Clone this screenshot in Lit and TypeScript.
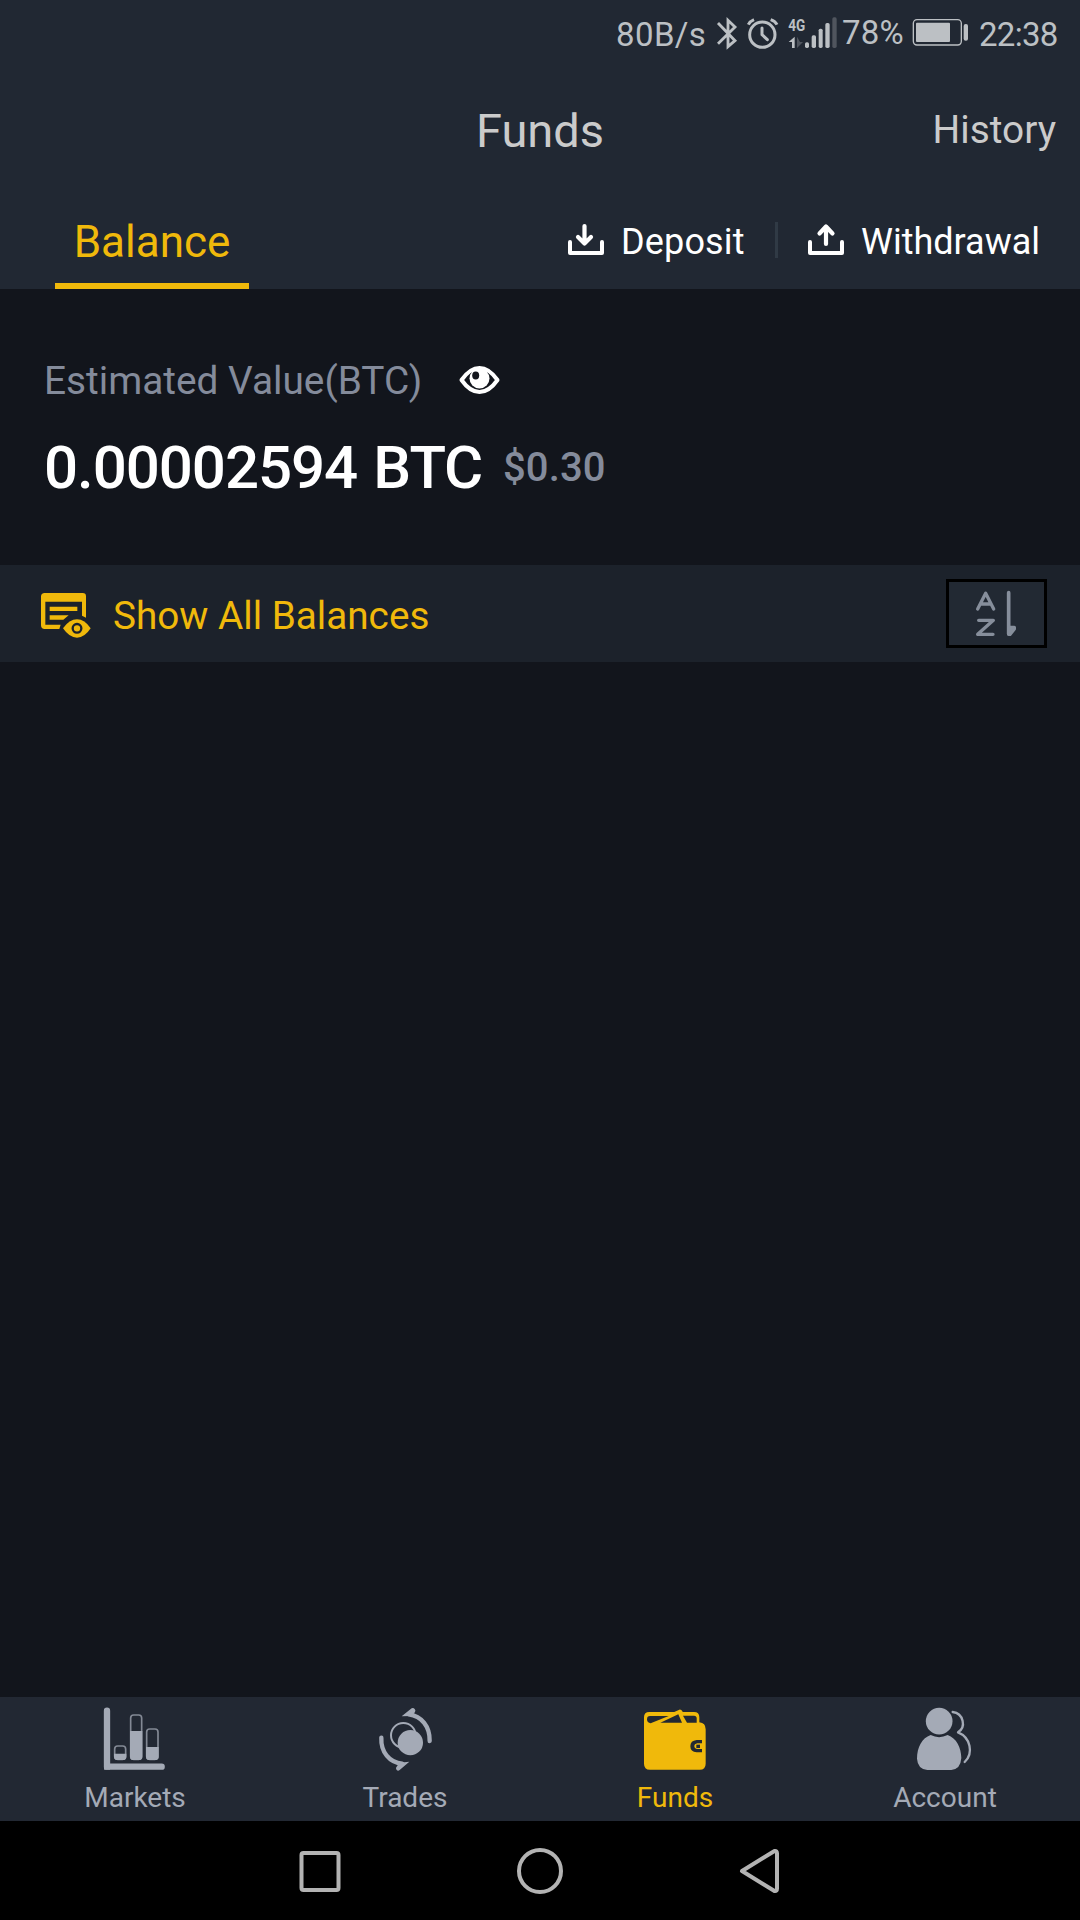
import { LitElement, html, svg, css, TemplateResult } from "lit";
import { customElement, property } from "lit/decorators.js";
import { classMap } from "lit/directives/class-map.js";

interface Tab {
  label: string;
  viewBox: string;
  icon: TemplateResult;
  active?: boolean;
}

const marketsIcon = svg`
  <path d="M141 92V260H305" fill="none" stroke="currentColor" stroke-width="19" stroke-linecap="round" stroke-linejoin="round"/>
  <path d="M132 240h18v29h-18z" fill="currentColor"/>
  <g fill="none" stroke="currentColor" stroke-width="5" opacity=".75">
    <rect x="164" y="198" width="33" height="40" rx="9"/>
    <rect x="212" y="105" width="33" height="133" rx="9"/>
    <rect x="260" y="147" width="34" height="91" rx="9"/>
  </g>
  <g fill="currentColor">
    <path d="M162 221h37v9q0 10-10 10h-17q-10 0-10-10z"/>
    <path d="M210 153h37v77q0 10-10 10h-17q-10 0-10-10z"/>
    <path d="M258 201h38v29q0 10-10 10h-18q-10 0-10-10z"/>
  </g>`;

const tradesIcon = svg`
  <g fill="none" stroke="currentColor" stroke-linecap="round">
    <path d="M269 183C270 139 245 108 206 103" stroke-width="13"/>
    <path d="M124 173C122 216 148 248 187 251" stroke-width="13"/>
    <circle cx="190" cy="166" r="37" stroke-width="6"/>
  </g>
  <path d="M185 109L215 85q5-3 9 2 4 5 1 9l-9 12z" fill="currentColor"/>
  <path d="M208 245L179 270q-5 4-9 0-4-5 0-10l8-12z" fill="currentColor"/>
  <circle cx="211" cy="188" r="38" fill="currentColor"/>`;

const fundsIcon = svg`
  <path d="M102 128V112q0-16 16-16H252q16 0 16 16v15q19 2 19 21v103q0 18-18 18H120q-18 0-18-18z" fill="currentColor"/>
  <path d="M120 108H176L122 130Q111 128 111 118q0-10 9-10z" fill="#222833"/>
  <path d="M151 128L205 103 216 128z" fill="#222833"/>
  <path d="M219 107H252q8 0 8 8v13H231z" fill="#222833"/>
  <path d="M191 97L208 89q6-1 9 5l5 9-14-4z" fill="currentColor"/>
  <path d="M276 180H260q-19 2-19 18.500t19 18.500H276V207H262q-9-2-9-8.500t9-8.500H276z" fill="#222833"/>
  <rect x="259" y="194" width="11" height="10" fill="#222833"/>`;

const accountIcon = svg`
  <circle cx="207.500" cy="123.500" r="40" fill="currentColor"/>
  <path d="M182 165Q207 178 233 165C259 174 274 203 274 234Q272 267 244 270H172Q143 267 141 236C141 202 156 174 182 165z" fill="currentColor"/>
  <path d="M248 96C281 100 289 142 264 157C301 172 312 219 284 246" fill="none" stroke="currentColor" stroke-width="7" stroke-linejoin="round" stroke-linecap="round"/>`;

@customElement("wallet-tab-bar")
class WalletTabBar extends LitElement {
  @property({ attribute: false }) tabs: Tab[] = [];

  static styles = css`
    :host { display: block; }
    .tabs {
      display: grid;
      grid-template-columns: repeat(4, 1fr);
      height: 124px;
      background: #222833;
    }
    .tab {
      display: flex;
      flex-direction: column;
      align-items: center;
      padding-top: 10px;
      color: #a4aab6;
      font-size: 28px;
      line-height: 33px;
    }
    .tab svg { display: block; width: 64px; height: 64px; margin-bottom: 10px; }
    .active { color: #f0b90b; }
  `;

  render() {
    return html`<nav class="tabs">
      ${this.tabs.map(
        (t) => html`<div class=${classMap({ tab: true, active: !!t.active })}>
          <svg viewBox=${t.viewBox}>${t.icon}</svg>
          <span>${t.label}</span>
        </div>`
      )}
    </nav>`;
  }
}

@customElement("status-strip")
class StatusStrip extends LitElement {
  static styles = css`
    :host { display: block; color: #bcc0c4; }
    .strip {
      display: flex;
      height: 70px;
      padding-left: 616px;
      font-size: 33px;
      line-height: 70px;
      white-space: nowrap;
    }
    svg { display: block; flex: none; height: 70px; }
    .speed { width: 99px; letter-spacing: 0.4px; }
    .bt { width: 24px; margin-right: 6px; }
    .alarm { width: 35px; margin-right: 6px; }
    .signal { width: 52px; margin-right: 4px; }
    .percent { width: 68px; line-height: 66px; letter-spacing: 0.2px; }
    .battery { width: 60px; margin-right: 9px; }
    .clock { letter-spacing: -0.7px; }
    .gen { font: 700 52px Roboto, sans-serif; }
  `;

  render() {
    return html`<div class="strip">
      <span class="speed">80B/s</span>
      <svg class="bt" viewBox="345 0 72 210" fill="none" stroke="currentColor" stroke-width="8.500">
        <path d="M354 69L405 122 384 140V61L405 81 354 131"/>
      </svg>
      <svg class="alarm" viewBox="435 0 105 210" fill="none" stroke="currentColor" stroke-width="9">
        <circle cx="487" cy="104" r="38"/>
        <path d="M486 84V104L502 119" stroke-width="9" stroke-linecap="round"/>
        <path d="M445 74Q450 64 462 59M531 74Q526 64 512 59" stroke-width="9"/>
      </svg>
      <svg class="signal" viewBox="558 0 156 210" fill="currentColor">
        <text class="gen" x="565" y="93" textLength="51" lengthAdjust="spacingAndGlyphs">4G</text>
        <path d="M584 110V144H576V126H566z"/>
        <path d="M591 110V144L609 126H600z" opacity=".3"/>
        <rect x="615" y="127" width="12" height="17" rx="5"/>
        <rect x="635" y="106" width="13" height="38" rx="5"/>
        <rect x="656" y="86" width="12" height="58" rx="5"/>
        <rect x="676" y="69" width="13" height="75" rx="5"/>
        <rect x="697" y="52" width="13" height="92" rx="5" opacity=".3"/>
      </svg>
      <span class="percent">78%</span>
      <svg class="battery" viewBox="930 0 180 210" fill="currentColor">
        <rect x="940" y="59" width="144" height="76" rx="11" fill="none" stroke="currentColor" stroke-width="4"/>
        <rect x="948" y="68" width="102" height="58" rx="3"/>
        <rect x="1091" y="72" width="13" height="50" rx="6"/>
      </svg>
      <span class="clock">22:38</span>
    </div>`;
  }
}

@customElement("app-root")
class AppRoot extends LitElement {
  static styles = css`
    :host { display: block; font-family: Roboto, sans-serif; }
    .screen {
      display: flex;
      flex-direction: column;
      width: 1080px;
      height: 1920px;
      overflow: hidden;
      background: #12151c;
    }
    svg { display: block; flex: none; }
    .top { height: 289px; background: #212833; }
    .title-row {
      display: grid;
      grid-template-columns: 1fr auto 1fr;
      align-items: center;
      height: 122px;
      padding: 0 24px;
      color: #cbcbcb;
    }
    .title { grid-column: 2; font-size: 47px; line-height: 56px; }
    .history { justify-self: end; font-size: 38.8px; line-height: 46px; margin-top: -2px; }
    .actions { display: flex; height: 97px; padding-left: 55px; }
    .balance-tab {
      box-sizing: border-box;
      width: 194px;
      height: 97px;
      border-bottom: 6px solid #f0b90b;
      color: #f0b90b;
      font-size: 44px;
      line-height: 101px;
      text-align: center;
      margin-right: 316px;
    }
    .action {
      display: flex;
      color: #fff;
      font-size: 36px;
      line-height: 101px;
    }
    .action svg { width: 40px; height: 97px; }
    .deposit { width: 210px; gap: 16px; letter-spacing: 0.15px; }
    .rule { width: 3px; height: 36px; margin: 30px 27px 0 0; background: #303a45; }
    .withdraw { gap: 16px; }
    .estimate { height: 276px; box-sizing: border-box; padding: 66px 0 0 44px; }
    .caption {
      display: flex;
      align-items: center;
      height: 50px;
      color: #848b9b;
      font-size: 38.8px;
      line-height: 50px;
    }
    .caption-text { width: 410px; padding-top: 2px; white-space: nowrap; }
    .eye { width: 50px; height: 50px; }
    .amounts { display: flex; align-items: center; height: 80px; margin-top: 23px; white-space: nowrap; }
    .btc {
      width: 459px;
      color: #fff;
      font-size: 60px;
      line-height: 80px;
      font-weight: 500;
      letter-spacing: -1.05px;
      word-spacing: 2.4px;
    }
    .usd { color: #848b9b; font-size: 40px; line-height: 80px; font-weight: 500; letter-spacing: 0.1px; }
    .filter {
      display: flex;
      align-items: center;
      box-sizing: border-box;
      height: 97px;
      padding: 0 33px 0 40px;
      background: #1c222b;
      color: #f0b90b;
    }
    .show-icon { width: 52px; height: 97px; margin-right: 21px; }
    .show { flex: 1; font-size: 38.7px; line-height: 46px; padding-top: 4px; }
    .sort {
      box-sizing: border-box;
      width: 101px;
      height: 69px;
      border: 3px solid #000;
      background: #222933;
      color: #868e9b;
    }
    .sort svg { width: 95px; height: 63px; }
    .list { flex: 1; }
    .system {
      display: flex;
      justify-content: space-between;
      align-items: center;
      box-sizing: border-box;
      height: 99px;
      padding: 0 295px;
      background: #000;
    }
    .system svg { width: 50px; height: 50px; }
  `;

  private tabs: Tab[] = [
    { label: "Markets", viewBox: "129 81 192 192", icon: marketsIcon },
    { label: "Trades", viewBox: "99 81 192 192", icon: tradesIcon },
    { label: "Funds", viewBox: "99 81 192 192", icon: fundsIcon, active: true },
    { label: "Account", viewBox: "129 81 192 192", icon: accountIcon },
  ];

  render() {
    return html`<div class="screen">
      <header class="top">
        <status-strip></status-strip>
        <div class="title-row">
          <span class="title">Funds</span>
          <span class="history">History</span>
        </div>
        <div class="actions">
          <div class="balance-tab">Balance</div>
          <div class="action deposit">
            <svg viewBox="0 0 40 97" fill="none" stroke="#fff" stroke-width="4" stroke-linecap="round" stroke-linejoin="round">
              <path d="M5 50V61H37V50" />
              <path d="M19.500 34V51M13 45L19.500 51.500 26 45" stroke-width="4.200"/>
            </svg>
            <span>Deposit</span>
          </div>
          <div class="rule"></div>
          <div class="action withdraw">
            <svg viewBox="0 0 40 97" fill="none" stroke="#fff" stroke-width="4" stroke-linecap="round" stroke-linejoin="round">
              <path d="M5 50V61H37V50" />
              <path d="M21 52V35M14.500 41.500L21 34.500 27.500 41.500" stroke-width="4.200"/>
            </svg>
            <span>Withdrawal</span>
          </div>
        </div>
      </header>
      <section class="estimate">
        <div class="caption">
          <span class="caption-text">Estimated Value(BTC)</span>
          <svg class="eye" viewBox="0 0 50 50">
            <path d="M7.500 25Q16 13 25.500 13T43.500 25Q35 37 25.500 37T7.500 25z" fill="none" stroke="#fff" stroke-width="4" stroke-linejoin="round"/>
            <circle cx="25.500" cy="23.500" r="10" fill="#fff"/>
            <ellipse cx="21.700" cy="20.500" rx="3.500" ry="4" fill="#12151c"/>
          </svg>
        </div>
        <div class="amounts">
          <span class="btc">0.00002594 BTC</span>
          <span class="usd">$0.30</span>
        </div>
      </section>
      <section class="filter">
        <svg class="show-icon" viewBox="120 30 156 291">
          <path d="M134 114H248q10 0 10 10V188L246 182V140H136V209H182L178 222H134q-11 0-11-11V125q0-11 11-11z" fill="#f0b90b"/>
          <path d="M149 155H232V168H149zM149 181H206L190 194H149z" fill="#f0b90b"/>
          <path d="M189 220Q208 193 231 193T272 220Q254 248 231 248T189 220z" fill="#f0b90b"/>
          <circle cx="231" cy="220" r="13" fill="none" stroke="#1c222b" stroke-width="7"/>
        </svg>
        <span class="show">Show All Balances</span>
        <div class="sort">
          <svg viewBox="87 81 285 189" fill="none" stroke="currentColor" stroke-width="10" stroke-linecap="round" stroke-linejoin="round">
            <path d="M173 162L197 115 221 162M181 147H213"/>
            <path d="M176 196H220L173 238H219"/>
            <path d="M266 113V236" stroke-width="11"/>
            <path d="M266 217H283V222L270 238H266z" fill="currentColor"/>
          </svg>
        </div>
      </section>
      <main class="list"></main>
      <wallet-tab-bar .tabs=${this.tabs}></wallet-tab-bar>
      <footer class="system">
        <svg viewBox="0 0 50 50" fill="none" stroke="#b3b3b3" stroke-width="4">
          <rect x="6.500" y="7" width="37" height="37" rx="2"/>
        </svg>
        <svg viewBox="0 0 50 50" fill="none" stroke="#b3b3b3" stroke-width="4">
          <circle cx="25" cy="25" r="21"/>
        </svg>
        <svg viewBox="0 0 50 50" fill="none" stroke="#b3b3b3" stroke-width="4" stroke-linejoin="round">
          <path d="M7 25L39.500 5Q42 4.500 42 7.500V42.500Q42 45.500 39.500 45z"/>
        </svg>
      </footer>
    </div>`;
  }
}
